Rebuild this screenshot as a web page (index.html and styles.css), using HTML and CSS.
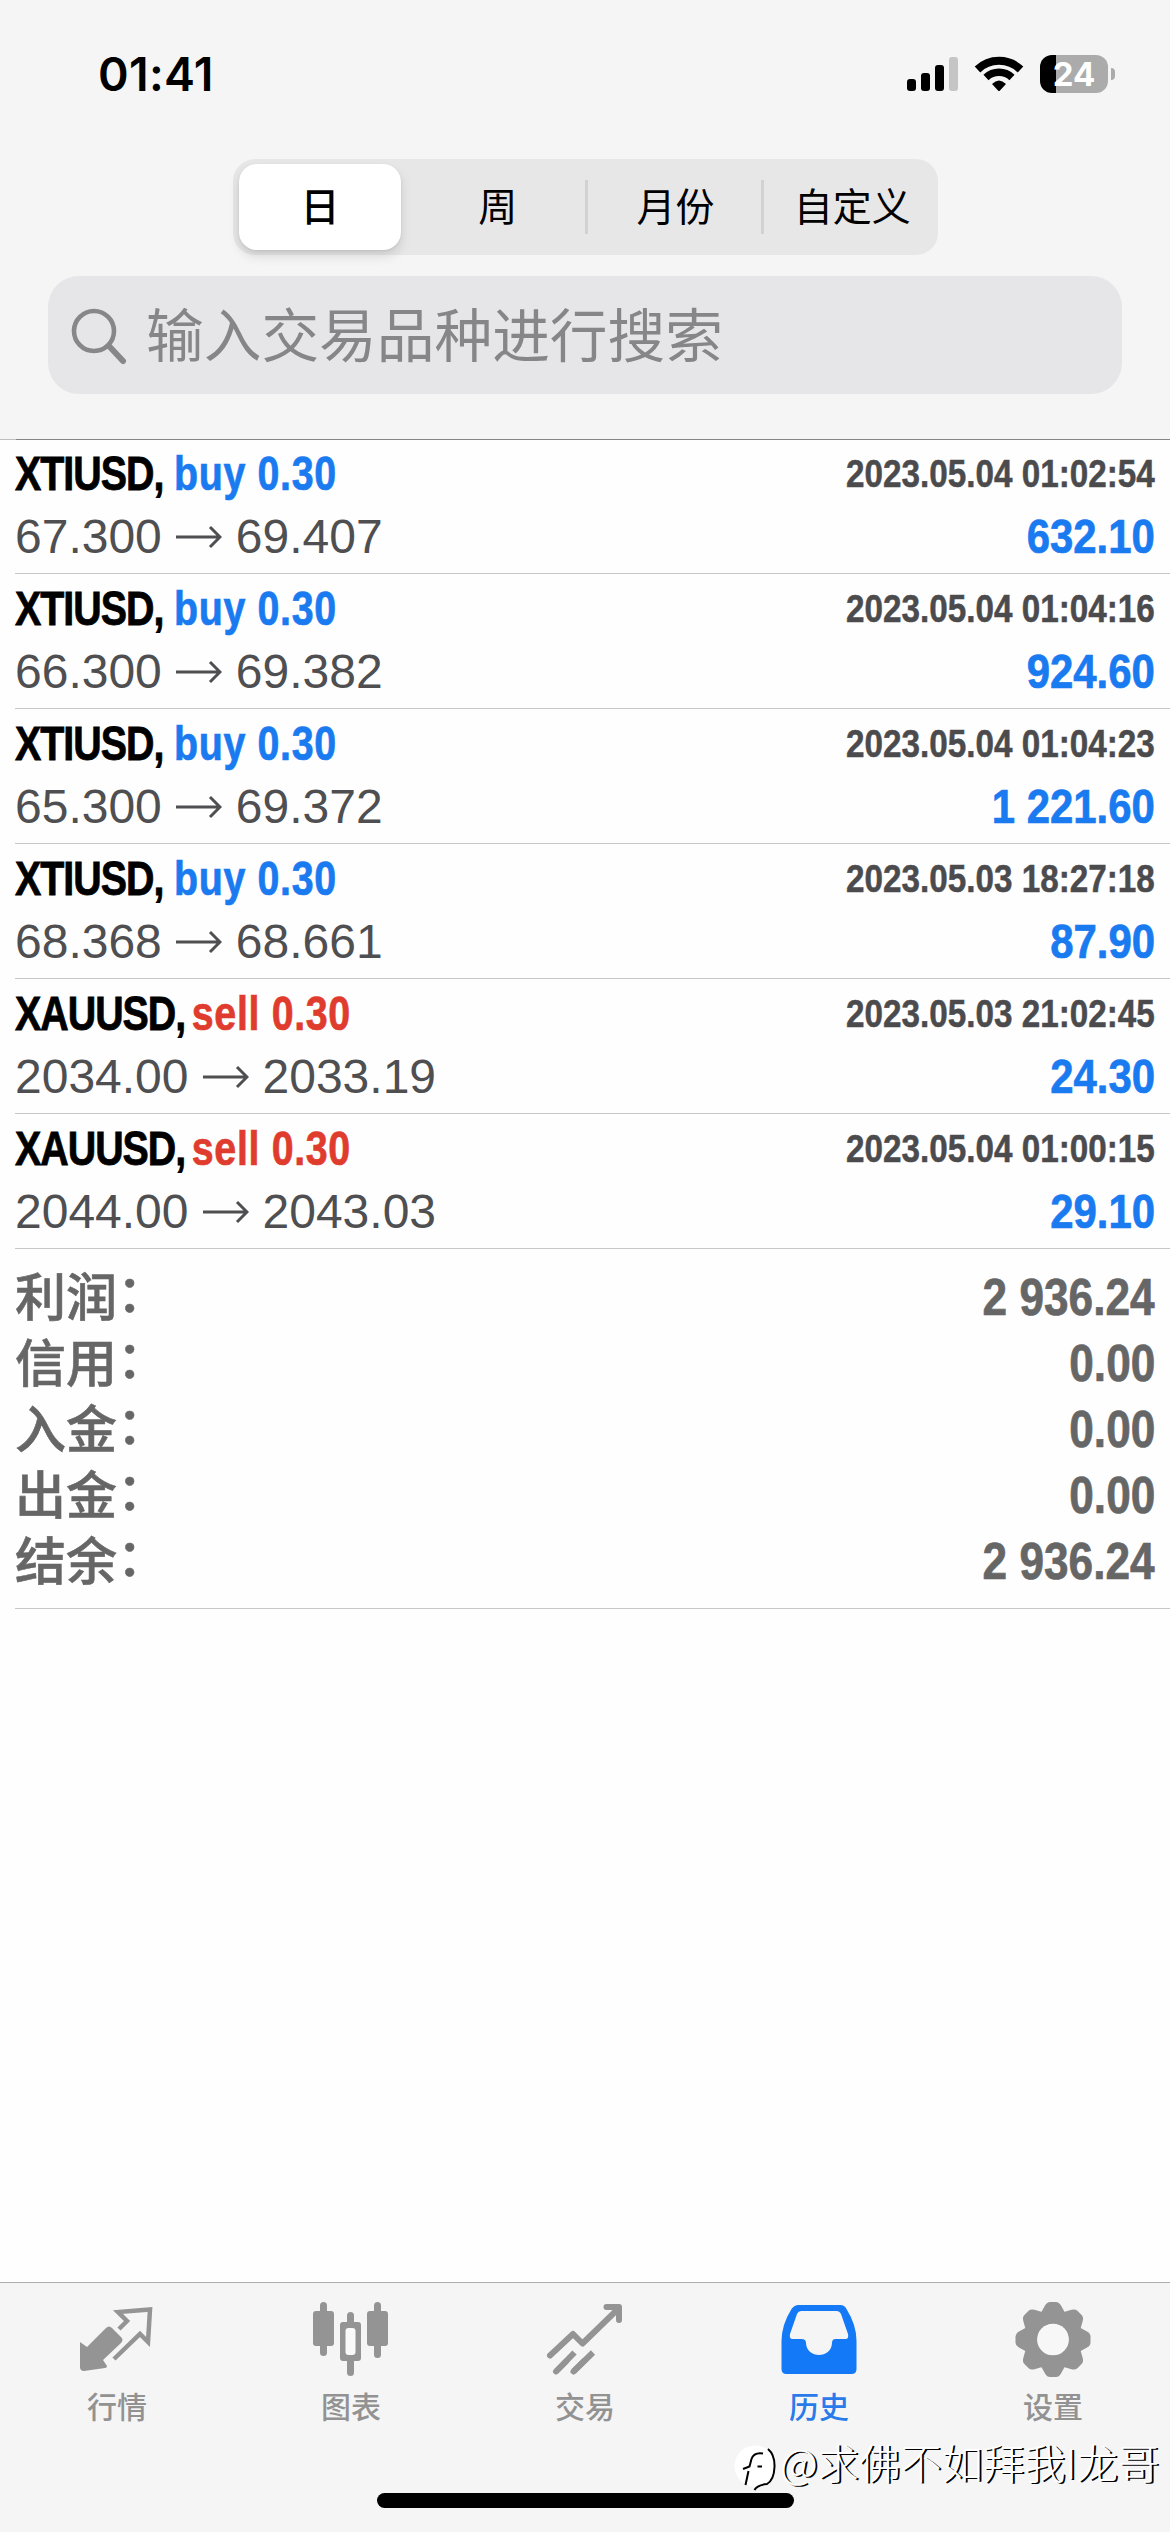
FILE: index.html
```html
<!DOCTYPE html>
<html lang="zh-CN">
<head>
<meta charset="utf-8">
<title>历史</title>
<link rel="stylesheet" href="styles.css">
</head>
<body>
<header class="header">
  <div class="status">
    <span class="clock">01:41</span>
    <div class="status-icons">
      <svg class="signal" width="51" height="38" viewBox="907 55 51 38">
        <rect x="907" y="79" width="9" height="12" rx="3"/>
        <rect x="921" y="73" width="9" height="18" rx="3"/>
        <rect x="935" y="65" width="9" height="26" rx="3"/>
        <rect class="dim" x="949" y="57" width="9" height="34" rx="3"/>
      </svg>
      <svg class="wifi" width="50" height="38" viewBox="974 55 50 38">
        <path d="M977.500 69.500A31 31 0 0 1 1020.500 69.500" fill="none" stroke="#000" stroke-width="8"/>
        <path d="M986 77.500A19 19 0 0 1 1012 77.500" fill="none" stroke="#000" stroke-width="7.500"/>
        <path d="M992 84Q999 77 1006 84L1000 90.500Q999 91.500 998 90.500Z"/>
      </svg>
      <div class="battery"><span class="battery-body">24</span><span class="battery-cap"></span></div>
    </div>
  </div>
  <nav class="segments">
    <span class="segment active">日</span>
    <span class="segment">周</span>
    <span class="segment">月份</span>
    <span class="segment">自定义</span>
  </nav>
  <div class="search">
    <svg width="60" height="60" viewBox="68 302 60 60" fill="none" stroke="#87878a" stroke-linecap="round">
      <circle cx="94" cy="328" r="20" stroke-width="4.600"/>
      <path d="M109 343L123 358" stroke-width="6"/>
    </svg>
    <span class="placeholder">输入交易品种进行搜索</span>
  </div>
</header>
<div class="rule"><div class="rule-inner"></div></div>
<main class="content">
  <section class="deals">
    <article class="deal"><div class="line"><span class="title"><b class="symbol">XTIUSD,</b><b class="side buy">buy 0.30</b></span><span class="date">2023.05.04 01:02:54</span></div><div class="line"><span class="price">67.300<svg class="arrow" viewBox="0 0 47 24"><path d="M1 12H45M35 2L45 12L35 22"/></svg>69.407</span><span class="amount">632.10</span></div></article>
    <article class="deal"><div class="line"><span class="title"><b class="symbol">XTIUSD,</b><b class="side buy">buy 0.30</b></span><span class="date">2023.05.04 01:04:16</span></div><div class="line"><span class="price">66.300<svg class="arrow" viewBox="0 0 47 24"><path d="M1 12H45M35 2L45 12L35 22"/></svg>69.382</span><span class="amount">924.60</span></div></article>
    <article class="deal"><div class="line"><span class="title"><b class="symbol">XTIUSD,</b><b class="side buy">buy 0.30</b></span><span class="date">2023.05.04 01:04:23</span></div><div class="line"><span class="price">65.300<svg class="arrow" viewBox="0 0 47 24"><path d="M1 12H45M35 2L45 12L35 22"/></svg>69.372</span><span class="amount">1 221.60</span></div></article>
    <article class="deal"><div class="line"><span class="title"><b class="symbol">XTIUSD,</b><b class="side buy">buy 0.30</b></span><span class="date">2023.05.03 18:27:18</span></div><div class="line"><span class="price">68.368<svg class="arrow" viewBox="0 0 47 24"><path d="M1 12H45M35 2L45 12L35 22"/></svg>68.661</span><span class="amount">87.90</span></div></article>
    <article class="deal"><div class="line"><span class="title"><b class="symbol">XAUUSD,</b><b class="side sell">sell 0.30</b></span><span class="date">2023.05.03 21:02:45</span></div><div class="line"><span class="price">2034.00<svg class="arrow" viewBox="0 0 47 24"><path d="M1 12H45M35 2L45 12L35 22"/></svg>2033.19</span><span class="amount">24.30</span></div></article>
    <article class="deal"><div class="line"><span class="title"><b class="symbol">XAUUSD,</b><b class="side sell">sell 0.30</b></span><span class="date">2023.05.04 01:00:15</span></div><div class="line"><span class="price">2044.00<svg class="arrow" viewBox="0 0 47 24"><path d="M1 12H45M35 2L45 12L35 22"/></svg>2043.03</span><span class="amount">29.10</span></div></article>
  </section>
  <section class="summary">
    <div class="total"><span class="label">利润<span class="colon">：</span></span><span class="value">2 936.24</span></div>
    <div class="total"><span class="label">信用<span class="colon">：</span></span><span class="value">0.00</span></div>
    <div class="total"><span class="label">入金<span class="colon">：</span></span><span class="value">0.00</span></div>
    <div class="total"><span class="label">出金<span class="colon">：</span></span><span class="value">0.00</span></div>
    <div class="total"><span class="label">结余<span class="colon">：</span></span><span class="value">2 936.24</span></div>
  </section>
</main>
<footer class="footer">
  <nav class="tabs">
    <a class="tab">
      <svg width="80" height="80" viewBox="77 2300 80 80">
        <path d="M80 2342L87 2347L106 2328Q109 2325 112 2328L121 2337Q124 2340 121 2343L103 2360L107 2366Q107 2368 105 2368L84 2371Q80 2371 80 2367Z"/>
        <path d="M119 2329L127 2321L118 2312L150 2309.500L148 2342L140 2334L114 2359" fill="none" stroke="#949494" stroke-width="4.500"/>
      </svg>
      <span>行情</span>
    </a>
    <a class="tab">
      <svg width="80" height="80" viewBox="311 2300 80 80">
        <rect x="313" y="2311" width="21" height="35" rx="3"/><rect x="320" y="2302" width="7" height="54" rx="3.500"/>
        <rect x="367" y="2311" width="21" height="35" rx="3"/><rect x="374" y="2302" width="7" height="56" rx="3.500"/>
        <rect x="347" y="2312" width="7" height="64" rx="3.500"/><rect x="340" y="2322" width="21" height="39" rx="3"/>
        <rect x="345.500" y="2328" width="10" height="27" rx="3" fill="#f9f9f9"/>
      </svg>
      <span>图表</span>
    </a>
    <a class="tab">
      <svg width="80" height="80" viewBox="545 2300 80 80" fill="none" stroke="#949494" stroke-width="6" stroke-linecap="round" stroke-linejoin="round">
        <path d="M550 2355.500L573 2334L582.500 2343.500L618 2309M606.500 2307H619V2320M556 2371.500L566 2361.500M573.500 2371.500L583.500 2361.500"/>
        <path d="M556 2371.500L574.500 2352.500M573.500 2371.500L593 2352.500" stroke-linecap="butt"/>
      </svg>
      <span>交易</span>
    </a>
    <a class="tab current">
      <svg width="80" height="80" viewBox="778.500 2300 80 80">
        <path fill-rule="evenodd" d="M798 2305H840Q844 2305 846 2309Q856 2325 856 2341V2369Q856 2374 851 2374H786Q781 2374 781 2369V2341Q781 2325 791 2309Q794 2305 798 2305ZM801 2311Q798 2311 796.500 2314L789.500 2334Q788.500 2339 792 2339H801Q805.500 2339 805.500 2343C806 2359 831 2359 831.500 2343Q831.500 2339 835 2339H845Q848.500 2339 847.500 2334L840.500 2314Q839 2311 836 2311Z"/>
      </svg>
      <span>历史</span>
    </a>
    <a class="tab">
      <svg width="80" height="80" viewBox="-40 -39.500 80 80">
        <path id="tooth" d="M-13 -25L-8 -34Q-6 -37.500 -3 -37.500H3Q6 -37.500 8 -34L13 -25Z"/>
        <use href="#tooth" transform="rotate(45)"/><use href="#tooth" transform="rotate(90)"/><use href="#tooth" transform="rotate(135)"/><use href="#tooth" transform="rotate(180)"/><use href="#tooth" transform="rotate(225)"/><use href="#tooth" transform="rotate(270)"/><use href="#tooth" transform="rotate(315)"/>
        <circle r="22.500" fill="none" stroke="#949494" stroke-width="14"/>
        <circle r="15.800" fill="#f7f7f7"/>
      </svg>
      <span>设置</span>
    </a>
  </nav>
  <div class="home-bar"></div>
  <div class="watermark">
    <svg width="46" height="52" viewBox="734 2442 46 52">
      <circle cx="755" cy="2467" r="20.500" fill="#fff"/>
      <path d="M768 2450Q775 2456 774.500 2468Q774 2481 767 2485Q757 2486 754.500 2491" fill="none" stroke="#000" stroke-width="2"/>
      <path d="M763 2454.500Q754 2453 751.500 2460L749.500 2467.500L743 2470M748.500 2472L745.500 2486M757.500 2467.500H762" fill="none" stroke="#000" stroke-width="2"/>
    </svg>
    <span class="handle">@求佛不如拜我I龙哥</span>
  </div>
</footer>
</body>
</html>
```
FILE: styles.css
```css
* { box-sizing: border-box; }
body {
  margin: 0;
  width: 1170px;
  height: 2532px;
  display: flex;
  flex-direction: column;
  background: #fefefe;
  overflow: hidden;
  font-family: "Liberation Sans", "Noto Sans CJK SC", sans-serif;
}
svg { display: block; flex: none; }

.header { height: 439px; background: #f5f5f5; flex: none; }
.status {
  height: 159px;
  padding: 46px 55px 0 98px;
  display: flex;
  justify-content: space-between;
  align-items: flex-start;
}
.clock { font: 600 46.500px/57px Inter, sans-serif; letter-spacing: .300px; }
.status-icons { display: flex; padding-top: 9px; }
.signal .dim { fill: #c5c5c5; }
.wifi { margin: 0 16px; }
.battery { display: flex; align-items: center; gap: 3px; }
.battery-body {
  width: 68px;
  height: 38px;
  border-radius: 12px;
  background: linear-gradient(90deg, #000 16px, #ababab 16px);
  color: #fff;
  font: 700 33px/38px Inter, sans-serif;
  text-align: center;
}
.battery-cap { width: 4px; height: 12px; border-radius: 0 5px 5px 0; background: #ababab; }

.segments {
  width: 705px;
  height: 96px;
  margin: 0 auto 21px 233px;
  border-radius: 22px;
  background: #e7e7e7;
  display: flex;
  align-items: center;
}
.segment {
  width: 177px;
  height: 54px;
  display: flex;
  align-items: center;
  justify-content: center;
  padding-left: 3px;
  font: 400 39px/56px "Liberation Sans", "Noto Sans CJK SC", sans-serif;
  padding-top: 2px;
  color: #000;
}
.segment + .segment + .segment { border-left: 3px solid #d2d2d2; padding-left: 2px; }
.segment.active {
  width: 162px;
  height: 86px;
  margin: 0 7px 0 6px;
  padding: 2px 0 0;
  border-radius: 18px;
  background: #fff;
  font-weight: 500;
  box-shadow: 0 6px 12px rgba(0, 0, 0, .12), 0 1px 3px rgba(0, 0, 0, .08);
}

.search {
  height: 118px;
  margin: 0 48px;
  padding-left: 20px;
  border-radius: 31px;
  background: #e6e6e8;
  display: flex;
  align-items: center;
  gap: 18px;
}
.placeholder { padding-top: 3px; font: 400 57.700px/80px "Liberation Sans", "Noto Sans CJK SC", sans-serif; color: #868688; }

.rule { height: 1px; background: #bdbdbd; padding-left: 16px; flex: none; }
.rule-inner { height: 1px; background: #858587; }

.content { flex: 1; padding-left: 15px; margin-top: -1px; }
.deal { height: 135px; padding: 3px 15px 0 0; border-bottom: 1px solid #c6c6c8; }
.line { height: 63px; display: flex; justify-content: space-between; align-items: center; white-space: pre; }
.title, .date, .amount, .value { font-weight: 700; }
/* The condensed face is a narrowed cut of the bold sans. */
.title { display: flex; font-size: 48px; line-height: 60px; transform: scaleX(.82); transform-origin: left; }
.symbol { color: #000; letter-spacing: -1.200px; -webkit-text-stroke: .800px #000; }
.side { margin-left: 13px; letter-spacing: .800px; -webkit-text-stroke: .700px currentColor; }
.side.sell { margin-left: 8px; }
.buy { color: #1a7af0; }
.sell { color: #e03c2e; }
.date { font-size: 39.500px; color: #4b4b4d; transform: scaleX(.842); transform-origin: right; -webkit-text-stroke: .500px currentColor; }
.price { display: flex; align-items: center; font-size: 48px; color: #4f4f51; }
.arrow { width: 47px; height: 24px; margin: 0 13.500px; fill: none; stroke: #4f4f51; stroke-width: 3; }
.amount { font-size: 48px; color: #1a7af0; transform: scaleX(.873); transform-origin: right; -webkit-text-stroke: .700px currentColor; }

.summary { height: 360px; padding: 15px 15px 0 0; border-bottom: 1px solid #c6c6c8; }
.total { height: 66px; display: flex; justify-content: space-between; align-items: center; color: #666; }
.label { padding-top: 3px; font: 500 51px/63px "Liberation Sans", "Noto Sans CJK SC", sans-serif; -webkit-text-stroke: .600px currentColor; }
.colon { vertical-align: 4px; line-height: 0; }
.value { font-size: 51px; transform: scaleX(.866); transform-origin: right; -webkit-text-stroke: .700px currentColor; }

.footer {
  position: relative;
  height: 250px;
  flex: none;
  border-top: 1px solid #adadaf;
  background: #f5f5f5;
  display: flex;
  flex-direction: column;
  align-items: center;
}
.tabs { width: 1170px; height: 210px; display: flex; }
.tab { width: 234px; padding-top: 17px; display: flex; flex-direction: column; align-items: center; color: #929292; fill: #949494; }
.tab span { font: 500 30px/44px "Noto Sans CJK SC", sans-serif; margin-top: 3px; }
.tab.current { color: #2a7bea; fill: #1379f7; }
.home-bar { width: 417px; height: 15px; border-radius: 8px; background: #000; }
.watermark { position: absolute; left: 734px; top: 158px; display: flex; align-items: flex-start; }
.handle { margin-top: -7px; font: 300 41.300px/54px "Noto Sans CJK SC", sans-serif; color: #fff; text-shadow: 2px 1px 0 #000; white-space: nowrap; }
```
